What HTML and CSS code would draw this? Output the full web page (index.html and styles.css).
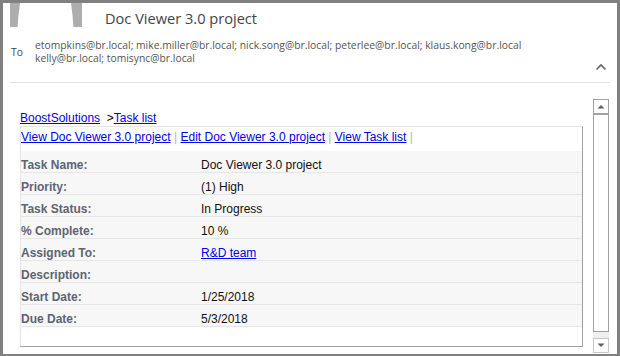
FILE: index.html
```html
<!DOCTYPE html>
<html lang="en">
<head>
    <meta charset="UTF-8">
    <title>Doc Viewer 3.0 project</title>
    <link rel="stylesheet" href="styles.css">
</head>
<body>
    <div class="window">
        <div class="header">
            <svg class="sender" width="72" height="24" viewBox="0 0 72 24">
                <path d="M0 0 H10 Q8.2 12 7.6 24 H0 Z" fill="#adadad"/>
                <path d="M61 0 H72 V24 H63.4 Q62.8 12 61 0 Z" fill="#adadad"/>
            </svg>
            <h1 class="subject">Doc Viewer 3.0 project</h1>
        </div>

        <div class="recipients">
            <span class="to">To</span>
            <div class="addresses">
                <div>etompkins@br.local; mike.miller@br.local; nick.song@br.local; peterlee@br.local; klaus.kong@br.local</div>
                <div>kelly@br.local; tomisync@br.local</div>
            </div>
            <svg class="collapse" width="12" height="8" viewBox="0 0 12 8">
                <path d="M1.5 6.5 L6 2 L10.5 6.5" fill="none" stroke="#666" stroke-width="1.6"/>
            </svg>
        </div>
        <div class="divider"></div>

        <div class="main">
            <div class="content">
                <div class="breadcrumb">
                    <a href="#">BoostSolutions</a>&nbsp; &gt;<a href="#">Task list</a>
                </div>
                <div class="panel">
                    <div class="actions">
                        <a href="#">View Doc Viewer 3.0 project</a> <span class="sep">|</span>
                        <a href="#">Edit Doc Viewer 3.0 project</a> <span class="sep">|</span>
                        <a href="#">View Task list</a> <span class="sep">|</span>
                    </div>
                    <div class="fields">
                        <div class="row"><span class="label">Task Name:</span><span class="value">Doc Viewer 3.0 project</span></div>
                        <div class="row"><span class="label">Priority:</span><span class="value">(1) High</span></div>
                        <div class="row"><span class="label">Task Status:</span><span class="value">In Progress</span></div>
                        <div class="row"><span class="label">% Complete:</span><span class="value">10 %</span></div>
                        <div class="row"><span class="label">Assigned To:</span><span class="value"><a href="#">R&amp;D team</a></span></div>
                        <div class="row"><span class="label">Description:</span><span class="value"></span></div>
                        <div class="row"><span class="label">Start Date:</span><span class="value">1/25/2018</span></div>
                        <div class="row"><span class="label">Due Date:</span><span class="value">5/3/2018</span></div>
                    </div>
                </div>
            </div>

            <div class="scrollbar">
                <div class="sb-thumb">
                    <div class="sb-up">
                        <svg width="8" height="5" viewBox="0 0 8 5"><path d="M0.5 4.5 L4 1 L7.5 4.5 Z" fill="#606060"/></svg>
                    </div>
                </div>
                <div class="sb-track"></div>
                <div class="sb-down">
                    <svg width="8" height="5" viewBox="0 0 8 5"><path d="M0.5 0.5 L7.5 0.5 L4 4 Z" fill="#606060"/></svg>
                </div>
            </div>
        </div>
    </div>
</body>
</html>
```

FILE: styles.css
```css
body {
    margin: 0;
    background: #808080;
}
.window {
    margin: 3px 3px 2px 3px;
    width: 614px;
    height: 351px;
    background: #ffffff;
    display: flex;
    flex-direction: column;
}
.header {
    display: flex;
    align-items: flex-start;
    height: 24px;
    padding-left: 7px;
}
.sender {
    display: block;
    flex: none;
}
.subject {
    margin: 0 0 0 23px;
    padding-top: 5px;
    font-family: "Open Sans", sans-serif;
    font-size: 14.6px;
    font-weight: normal;
    line-height: 20px;
    color: #444444;
}
.recipients {
    display: flex;
    align-items: center;
    margin-top: 12px;
    padding: 0 0 17px 8px;
    font-family: "Open Sans", sans-serif;
    font-size: 10.35px;
    line-height: 13px;
    color: #555555;
}
.to {
    width: 24px;
    color: #444444;
}
.collapse {
    margin-left: auto;
    margin-right: 10px;
    align-self: flex-end;
    margin-bottom: -6px;
}
.divider {
    margin: 0 7px 0 7px;
    border-top: 1px solid #e3e3e3;
}
.main {
    flex: 1;
    display: flex;
}
.content {
    flex: 1;
    display: flex;
    flex-direction: column;
    padding: 28px 0 7px 17px;
    font-family: "Liberation Sans", Arial, sans-serif;
    font-size: 12px;
    line-height: 15px;
}
a {
    color: #0000ee;
}
.panel {
    flex: 1;
    border: 1px solid #a0a0a0;
    border-top-color: #e6e6e6;
    border-left-color: #e6e6e6;
}
.actions {
    padding: 3px 0 6px 0;
}
.sep {
    color: #b4b4b4;
}
.row {
    display: flex;
    box-sizing: border-box;
    height: 22px;
    padding-top: 7px;
    background: #f7f7f7;
    border-bottom: 1px solid #e6e6e6;
}
.label {
    width: 180px;
    font-weight: bold;
    color: #5d6472;
}
.value {
    color: #111111;
}
.scrollbar {
    width: 16px;
    margin: 16px 8px 1px 10px;
    display: flex;
    flex-direction: column;
    box-sizing: border-box;
}
.sb-thumb {
    flex: 1;
    border: 1px solid #a0a0a0;
}
.sb-up {
    height: 13px;
    border-bottom: 2px solid #a0a0a0;
    display: flex;
    justify-content: center;
    align-items: center;
}
.sb-track {
    height: 6px;
    background: #efefef;
}
.sb-down {
    height: 13px;
    border: 1px solid #c6c6c6;
    display: flex;
    justify-content: center;
    align-items: center;
}
.sb-up svg,
.sb-down svg {
    display: block;
}
```
